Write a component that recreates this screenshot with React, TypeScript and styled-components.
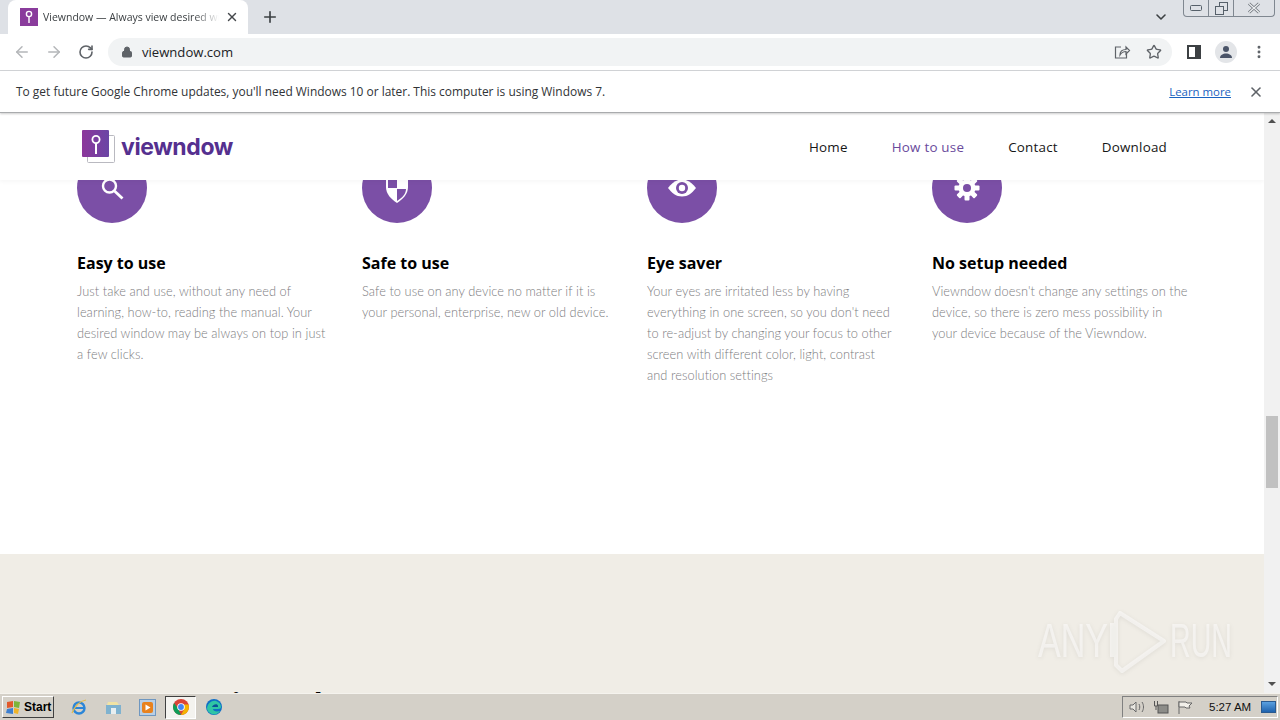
import { createGlobalStyle, styled } from 'styled-components';
import {
  ArrowLeft,
  ArrowRight,
  ChevronDown,
  EllipsisVertical,
  Lock,
  Plus,
  RotateCw,
  Star,
  X,
} from 'lucide-react';

const GlobalStyle = createGlobalStyle`
  html, body { margin: 0; padding: 0; height: 720px; overflow: hidden; background: #fff; }
  * { box-sizing: border-box; }
  #root { width: 1280px; height: 720px; }
`;

const Screen = styled.div`
  width: 1280px;
  height: 720px;
  display: flex;
  flex-direction: column;
  font-family: 'Open Sans', 'Liberation Sans', sans-serif;
  position: relative;
`;

const TabStrip = styled.div`
  height: 34px;
  background: #dee1e6;
  display: flex;
  align-items: flex-end;
  padding-left: 8px;
  flex: none;
`;

const Tab = styled.div`
  width: 240px;
  height: 34px;
  background: #fff;
  border-radius: 8px 8px 0 0;
  display: flex;
  align-items: center;
  padding: 0 9px 0 12px;
  font-size: 10.5px;
  color: #3c4043;
`;

const TabTitle = styled.span`
  flex: 1;
  margin: 0 6px 0 5px;
  white-space: nowrap;
  overflow: hidden;
  -webkit-mask-image: linear-gradient(90deg, #000 86%, transparent);
  mask-image: linear-gradient(90deg, #000 86%, transparent);
`;

const NewTab = styled.div`
  margin: 0 0 1px 13px;
  height: 33px;
  display: flex;
  align-items: center;
  color: #3c4043;
`;

const StripFill = styled.div`
  flex: 1;
  height: 34px;
  display: flex;
  justify-content: flex-end;
  align-items: flex-start;
  color: #3c4043;
`;

const Caret = styled.div`
  margin: 9px 14px 0 0;
  display: flex;
`;

const WindowButtons = styled.div`
  width: 92px;
  height: 17px;
  margin-right: 5px;
  display: flex;
  border: 1px solid #7f8790;
  border-top: none;
  border-radius: 0 0 4px 4px;
`;

const WindowButton = styled.div<{ $w: number }>`
  width: ${p => p.$w}px;
  display: flex;
  align-items: center;
  justify-content: center;
  border-right: 1px solid #7f8790;
  color: #56606a;
  &:last-child { border-right: none; }
`;

const Toolbar = styled.div`
  height: 37px;
  background: #fff;
  border-bottom: 1px solid #d3d5d8;
  display: flex;
  align-items: center;
  padding-left: 13px;
  flex: none;
`;

const NavIcon = styled.div<{ $muted?: boolean; $gap: number }>`
  display: flex;
  margin-right: ${p => p.$gap}px;
  color: ${p => (p.$muted ? '#b4b6b9' : '#5f6368')};
`;

const Omnibox = styled.div`
  width: 1064px;
  height: 28px;
  background: #f1f3f4;
  border-radius: 14px;
  display: flex;
  align-items: center;
  padding: 0 10px 0 13px;
  font-size: 13.1px;
  color: #202124;
`;

const Url = styled.span`
  flex: 1;
  margin-left: 9px;
`;

const OmniIcon = styled.div`
  display: flex;
  margin-left: 15px;
  color: #5f6368;
`;

const Side = styled.div`
  flex: 1;
  display: flex;
  align-items: center;
  padding-left: 15px;
  color: #3c4043;
`;

const Avatar = styled.div`
  width: 22px;
  height: 22px;
  margin-left: 14px;
  border-radius: 50%;
  background: #e3e5e8;
  display: flex;
  align-items: center;
  justify-content: center;
`;

const Menu = styled.div`
  display: flex;
  margin-left: 14px;
  color: #5f6368;
`;

const InfoBar = styled.div`
  height: 42px;
  background: #fff;
  border-bottom: 1px solid #a9abad;
  box-shadow: 0 1px 2px rgba(0, 0, 0, 0.2);
  display: flex;
  align-items: center;
  padding: 0 16px 0 16px;
  font-size: 11.95px;
  color: #303336;
  flex: none;
  position: relative;
  z-index: 3;
`;

const InfoText = styled.span`
  flex: 1;
`;

const InfoLink = styled.a`
  color: #1a62c0;
  font-size: 11.4px;
  text-decoration: underline;
  margin-right: 17px;
`;

const InfoClose = styled.div`
  display: flex;
  color: #5f6368;
`;

const Viewport = styled.div`
  flex: 1;
  min-height: 0;
  display: flex;
`;

const Page = styled.div`
  flex: 1;
  min-width: 0;
  display: flex;
  flex-direction: column;
  overflow: hidden;
`;

const Header = styled.header`
  height: 67px;
  flex: none;
  background: #fff;
  display: flex;
  align-items: center;
  padding: 0 97px 0 82px;
  justify-content: space-between;
  position: relative;
  z-index: 2;
  box-shadow: 0 2px 4px rgba(0, 0, 0, 0.035);
`;

const Logo = styled.div`
  display: flex;
  align-items: center;
`;

const LogoWord = styled.span`
  margin: 1px 0 0 6px;
  font-family: 'Inter', 'Liberation Sans', sans-serif;
  font-size: 23px;
  font-weight: 700;
  letter-spacing: -0.4px;
  color: #55308f;
`;

const Links = styled.nav`
  display: flex;
  gap: 44px;
`;

const NavLink = styled.a<{ $active?: boolean }>`
  font-size: 13.4px;
  letter-spacing: 0.22px;
  color: ${p => (p.$active ? '#6a4a9c' : '#161616')};
`;

const Features = styled.section`
  height: 374px;
  flex: none;
  background: #fff;
  display: grid;
  grid-template-columns: repeat(4, 285px);
  padding-left: 77px;
  overflow: hidden;
`;

const Feature = styled.article`
  min-width: 0;
`;

const IconCircle = styled.div`
  width: 70px;
  height: 70px;
  margin-top: -27px;
  border-radius: 50%;
  background: #7b4fa6;
  display: flex;
  align-items: center;
  justify-content: center;
`;

const FeatureTitle = styled.h3`
  margin: 29px 0 0;
  font-size: 16px;
  line-height: 22px;
  font-weight: 700;
  color: #000;
`;

const FeatureText = styled.p`
  margin: 7px 0 0;
  font-family: 'Lato', 'Open Sans', sans-serif;
  font-size: 12.8px;
  line-height: 21px;
  font-weight: 300;
  letter-spacing: 0.06px;
  color: #7c7c80;
  white-space: nowrap;
`;

const Beige = styled.section`
  flex: 1;
  min-height: 0;
  background: #f0ede6;
  overflow: hidden;
  padding: 134px 0 0 212px;
`;

const BeigeTitle = styled.h2`
  margin: 0;
  font-size: 30px;
  line-height: 32px;
  font-weight: 700;
  word-spacing: 6px;
  color: #000;
  white-space: nowrap;
`;

const Scrollbar = styled.div`
  width: 16px;
  flex: none;
  background: #f1f1f1;
  display: flex;
  flex-direction: column;
  align-items: center;
  justify-content: space-between;
  padding: 6px 0 7px;
  position: relative;
`;

const Thumb = styled.div`
  position: absolute;
  left: 2px;
  top: 303px;
  width: 12px;
  height: 72px;
  background: #c1c1c1;
`;

const ScrollArrow = styled.div<{ $down?: boolean }>`
  width: 0;
  height: 0;
  border-left: 4px solid transparent;
  border-right: 4px solid transparent;
  ${p => (p.$down ? 'border-top: 4px solid #505050;' : 'border-bottom: 4px solid #505050;')}
`;

const Taskbar = styled.footer`
  height: 27px;
  flex: none;
  background: #d4d0c8;
  border-top: 1px solid #f5f3ee;
  display: flex;
  align-items: center;
  font-family: 'Liberation Sans', sans-serif;
  position: relative;
  z-index: 4;
`;

const StartButton = styled.div`
  width: 52px;
  height: 22px;
  margin-left: 2px;
  background: #d4d0c8;
  border: 1px solid;
  border-color: #fff #404040 #404040 #fff;
  display: flex;
  align-items: center;
  gap: 2px;
  padding-left: 2px;
  font-size: 12px;
  font-weight: 700;
  color: #000;
`;

const QuickLaunch = styled.div`
  display: flex;
  align-items: center;
  margin-left: 16px;
  gap: 17px;
  height: 100%;
`;

const ActiveApp = styled.div`
  width: 31px;
  height: 23px;
  margin: 0 -7px 0 -8px;
  background: #f4f3ef;
  border: 1px solid;
  border-color: #404040 #fff #fff #404040;
  display: flex;
  align-items: center;
  justify-content: center;
`;

const Tray = styled.div`
  margin-left: auto;
  margin-right: 2px;
  width: 156px;
  height: 22px;
  border: 1px solid;
  border-color: #808080 #fff #fff #808080;
  display: flex;
  align-items: center;
  padding-left: 6px;
  font-size: 11.5px;
  color: #111;
`;

const TrayIcons = styled.div`
  display: flex;
  align-items: center;
  gap: 8px;
`;

const Clock = styled.span`
  margin-left: 16px;
  white-space: nowrap;
`;

const ShowDesktop = styled.div`
  width: 15px;
  height: 12px;
  margin-left: 10px;
  background: linear-gradient(180deg, #5aa0e0, #1f62ad);
  border: 1px solid #2a5a90;
`;

const Watermark = styled.svg`
  position: absolute;
  left: 1036px;
  top: 605px;
  pointer-events: none;
  z-index: 5;
  filter: drop-shadow(0 1px 2px rgba(0, 0, 0, 0.14));
`;

const WatermarkWord = styled.text`
  font-family: 'Liberation Sans', sans-serif;
  font-size: 48px;
  fill: rgba(255, 255, 255, 0.5);
`;

const features = [
  {
    title: 'Easy to use',
    icon: 'search',
    lines: [
      'Just take and use, without any need of',
      'learning, how-to, reading the manual.  Your',
      'desired window may be always on top in just',
      'a few clicks.',
    ],
  },
  {
    title: 'Safe to use',
    icon: 'shield',
    lines: ['Safe to use on any device no matter if it is', 'your personal, enterprise, new or old device.'],
  },
  {
    title: 'Eye saver',
    icon: 'eye',
    lines: [
      'Your eyes are irritated less by having',
      "everything in one screen, so you don't need",
      'to re-adjust by changing your focus to other',
      'screen with different color, light, contrast',
      'and resolution settings',
    ],
  },
  {
    title: 'No setup needed',
    icon: 'gear',
    lines: [
      "Viewndow doesn't change any settings on the",
      'device, so there is zero mess possibility in',
      'your device because of the Viewndow.',
    ],
  },
];

const FavIcon = () => (
  <svg width="18" height="18" viewBox="0 0 18 18">
    <rect width="18" height="18" fill="#8a3c9c" />
    <circle cx="9" cy="6" r="2.6" fill="none" stroke="#fff" strokeWidth="1.4" />
    <rect x="8.3" y="8.5" width="1.4" height="6.5" fill="#fff" />
  </svg>
);

const LogoMark = () => (
  <svg width="33" height="33" viewBox="0 0 33 33">
    <defs>
      <linearGradient id="logoFill" x1="0" x2="1" y1="0" y2="0">
        <stop offset="0" stopColor="#8c379b" />
        <stop offset="1" stopColor="#6a45a5" />
      </linearGradient>
    </defs>
    <rect x="5.5" y="5.5" width="27" height="27" rx="1" fill="#fff" stroke="#b9b9c0" />
    <rect x="0" y="0" width="27" height="27" rx="1" fill="url(#logoFill)" />
    <circle cx="14" cy="9.5" r="3.6" fill="none" stroke="#fff" strokeWidth="1.8" />
    <rect x="13" y="13" width="2" height="11" fill="#fff" />
  </svg>
);

const FeatureIcon = ({ name }: { name: string }) => {
  if (name === 'search') {
    return (
      <svg width="26" height="26" viewBox="0 0 26 26" fill="none" stroke="#fff">
        <circle cx="10.5" cy="11" r="6.5" strokeWidth="2.4" />
        <path d="M15.500 16l8 7.500" strokeWidth="2.800" />
      </svg>
    );
  }
  if (name === 'shield') {
    return (
      <svg width="26" height="30" viewBox="0 0 26 30">
        <path d="M13 1l11 3v10c0 7-5 12-11 16C7 26 2 21 2 14V4z" fill="#fff" />
        <path d="M13 4L4 6.500V15h9zM13 16h9c0 5-4 9-9 12z" fill="#7b4fa6" />
      </svg>
    );
  }
  if (name === 'eye') {
    return (
      <svg width="28" height="18" viewBox="0 0 28 18">
        <path d="M0 9c4-5 8-8.500 14-8.500S24 4 28 9c-4 5-8 8.500-14 8.500S4 14 0 9z" fill="#fff" />
        <circle cx="14" cy="9" r="6" fill="#7b4fa6" />
        <circle cx="14" cy="9" r="3.200" fill="#fff" />
      </svg>
    );
  }
  return (
    <svg width="26" height="26" viewBox="0 0 26 26">
      {[0, 45, 90, 135, 180, 225, 270, 315].map(angle => (
        <rect key={angle} x="10.500" y="0.500" width="5" height="6" rx="1" fill="#fff" transform={`rotate(${angle} 13 13)`} />
      ))}
      <circle cx="13" cy="13" r="8.500" fill="#fff" />
      <circle cx="13" cy="13" r="4" fill="#7b4fa6" />
    </svg>
  );
};

const App = () => (
  <Screen>
    <GlobalStyle />
    <TabStrip>
      <Tab>
        <FavIcon />
        <TabTitle>Viewndow — Always view desired windows</TabTitle>
        <X size={14} strokeWidth={2.4} color="#45484c" />
      </Tab>
      <NewTab>
        <Plus size={18} strokeWidth={2.2} />
      </NewTab>
      <StripFill>
        <Caret>
          <ChevronDown size={16} strokeWidth={2.4} />
        </Caret>
        <WindowButtons>
          <WindowButton $w={25}>
            <svg width="12" height="6" viewBox="0 0 12 6">
              <rect x=".5" y=".5" width="11" height="5" rx="1" fill="none" stroke="currentColor" />
            </svg>
          </WindowButton>
          <WindowButton $w={25}>
            <svg width="13" height="13" viewBox="0 0 13 13" fill="none" stroke="currentColor">
              <rect x="4.500" y=".5" width="8" height="8" />
              <rect x=".5" y="4.500" width="8" height="8" fill="#dee1e6" />
            </svg>
          </WindowButton>
          <WindowButton $w={40}>
            <svg width="14" height="12" viewBox="0 0 14 12" fill="none">
              <path d="M2 1.500l10 9M12 1.500l-10 9" stroke="#6a7078" strokeWidth="3" />
              <path d="M2 1.500l10 9M12 1.500l-10 9" stroke="#eceef0" strokeWidth="1.400" />
            </svg>
          </WindowButton>
        </WindowButtons>
      </StripFill>
    </TabStrip>
    <Toolbar>
      <NavIcon $muted $gap={14}>
        <ArrowLeft size={18} />
      </NavIcon>
      <NavIcon $muted $gap={15}>
        <ArrowRight size={18} />
      </NavIcon>
      <NavIcon $gap={14}>
        <RotateCw size={16} strokeWidth={2.4} />
      </NavIcon>
      <Omnibox>
        <Lock size={12} fill="#5f6368" color="#5f6368" />
        <Url>viewndow.com</Url>
        <OmniIcon>
          <svg width="18" height="18" viewBox="0 0 18 18" fill="none" stroke="currentColor" strokeWidth="1.200">
            <path d="M8 4H2.500v11h11v-4" />
            <path d="M7 12c0-4 3-5.500 6-5.500V4l3.500 3.500L13 11V8.500c-2.500 0-4.500 1-6 3.500z" />
          </svg>
        </OmniIcon>
        <OmniIcon>
          <Star size={16} strokeWidth={2} />
        </OmniIcon>
      </Omnibox>
      <Side>
        <svg width="14" height="14" viewBox="0 0 14 14">
          <rect x="1" y="1" width="12" height="12" fill="none" stroke="#3c4043" strokeWidth="2" />
          <rect x="8" y="1" width="5" height="12" fill="#3c4043" />
        </svg>
        <Avatar>
          <svg width="14" height="14" viewBox="0 0 14 14" fill="#4a5468">
            <circle cx="7" cy="4" r="3" />
            <path d="M1 13c0-3 3-4.500 6-4.500s6 1.500 6 4.500z" />
          </svg>
        </Avatar>
        <Menu>
          <EllipsisVertical size={16} strokeWidth={2.4} />
        </Menu>
      </Side>
    </Toolbar>
    <InfoBar>
      <InfoText>To get future Google Chrome updates, you'll need Windows 10 or later. This computer is using Windows 7.</InfoText>
      <InfoLink>Learn more</InfoLink>
      <InfoClose>
        <X size={16} strokeWidth={2.4} />
      </InfoClose>
    </InfoBar>
    <Viewport>
      <Page>
        <Header>
          <Logo>
            <LogoMark />
            <LogoWord>viewndow</LogoWord>
          </Logo>
          <Links>
            <NavLink>Home</NavLink>
            <NavLink $active>How to use</NavLink>
            <NavLink>Contact</NavLink>
            <NavLink>Download</NavLink>
          </Links>
        </Header>
        <Features>
          {features.map(f => (
            <Feature key={f.title}>
              <IconCircle>
                <FeatureIcon name={f.icon} />
              </IconCircle>
              <FeatureTitle>{f.title}</FeatureTitle>
              <FeatureText>
                {f.lines.map(line => (
                  <span key={line}>
                    {line}
                    <br />
                  </span>
                ))}
              </FeatureText>
            </Feature>
          ))}
        </Features>
        <Beige>
          <BeigeTitle>Viewndow &gt; Screen Cast</BeigeTitle>
        </Beige>
      </Page>
      <Scrollbar>
        <ScrollArrow />
        <Thumb />
        <ScrollArrow $down />
      </Scrollbar>
    </Viewport>
    <Taskbar>
      <StartButton>
        <svg width="17" height="16" viewBox="0 0 17 16">
          <path d="M2 3l6-1v6l-6 1z" fill="#e2592c" />
          <path d="M9 2l6 1-1 6-5-1z" fill="#7db53a" />
          <path d="M2 10l6-1v6l-7-1z" fill="#3e7fd0" />
          <path d="M9 9l5 1-1 5-4-1z" fill="#f0b429" />
        </svg>
        Start
      </StartButton>
      <QuickLaunch>
        <svg width="18" height="18" viewBox="0 0 18 18" fill="none">
          <circle cx="9" cy="10" r="5.500" stroke="#2c86d8" strokeWidth="2.400" />
          <path d="M4 10h10" stroke="#2c86d8" strokeWidth="2" />
          <path d="M2 15C5 8 10 3 16 2" stroke="#e5bc4a" strokeWidth="1.200" />
        </svg>
        <svg width="17" height="17" viewBox="0 0 17 17">
          <path d="M3 3h9l2 3H2z" fill="#f1e3a4" />
          <rect x="1" y="6" width="15" height="9" fill="#7fb2cf" />
          <rect x="6" y="9" width="5" height="6" fill="#e8eef0" />
        </svg>
        <svg width="17" height="17" viewBox="0 0 17 17">
          <rect x=".5" y=".5" width="16" height="16" fill="#b8cfe6" stroke="#6f97c0" />
          <rect x="3" y="3" width="11" height="11" rx="2" fill="#e8821e" />
          <path d="M6.500 5.500l5 3-5 3z" fill="#fff" />
        </svg>
        <ActiveApp>
          <svg width="16" height="16" viewBox="0 0 16 16">
            <circle cx="8" cy="8" r="8" fill="#db4437" />
            <path d="M8 16a8 8 0 0 1-6.900-12L5 9.500 8 16z" fill="#0f9d58" />
            <path d="M15.500 5.500A8 8 0 0 1 8 16l3-5.500V5.500z" fill="#f4b400" />
            <circle cx="8" cy="8" r="3.800" fill="#fff" />
            <circle cx="8" cy="8" r="2.900" fill="#4285f4" />
          </svg>
        </ActiveApp>
        <svg width="16" height="16" viewBox="0 0 16 16">
          <circle cx="8" cy="8" r="8" fill="#0f6fc6" />
          <path d="M1 9c1-5 5-8 9-7 3 1 5 3 5 6 0 1-1 2-3 2H7c0 2 3 3 7 2-2 3-5 4-8 3-3-1-5-3-5-6z" fill="#2fc5a5" />
          <path d="M6 8c1-2 3-3 5-2.500 1 .3 1 1.500 1 2.500z" fill="#0b4f97" />
        </svg>
      </QuickLaunch>
      <Tray>
        <TrayIcons>
          <svg width="16" height="14" viewBox="0 0 16 14" fill="none" stroke="#6a6a6a">
            <path d="M1 5h3l3-3v10L4 9H1z" fill="#e8e6e0" />
            <path d="M10 4c1 2 1 4 0 6M13 2c2 3 2 7 0 10" />
          </svg>
          <svg width="16" height="15" viewBox="0 0 16 15" fill="none" stroke="#555">
            <rect x="5" y="5" width="10" height="8" fill="#8c8c88" />
            <path d="M1.500 1v5h3V1M3 6v4" />
          </svg>
          <svg width="16" height="15" viewBox="0 0 16 15" fill="none" stroke="#666">
            <path d="M2 1v13" />
            <path d="M2 2h7l1 1h5l-3 3 1 2H9L8 7H2z" fill="#f2f0ea" />
          </svg>
        </TrayIcons>
        <Clock>5:27 AM</Clock>
        <ShowDesktop />
      </Tray>
    </Taskbar>
    <Watermark width="200" height="70" viewBox="0 0 200 70">
      <WatermarkWord x="2" y="52" textLength="70" lengthAdjust="spacingAndGlyphs">
        ANY
      </WatermarkWord>
      <path
        d="M76 18v34M84 8l44 28-42 30-6-6V14z"
        fill="none"
        stroke="rgba(255,255,255,0.5)"
        strokeWidth="4"
        strokeLinejoin="round"
      />
      <WatermarkWord x="134" y="52" textLength="62" lengthAdjust="spacingAndGlyphs">
        RUN
      </WatermarkWord>
    </Watermark>
  </Screen>
);

export default App;
